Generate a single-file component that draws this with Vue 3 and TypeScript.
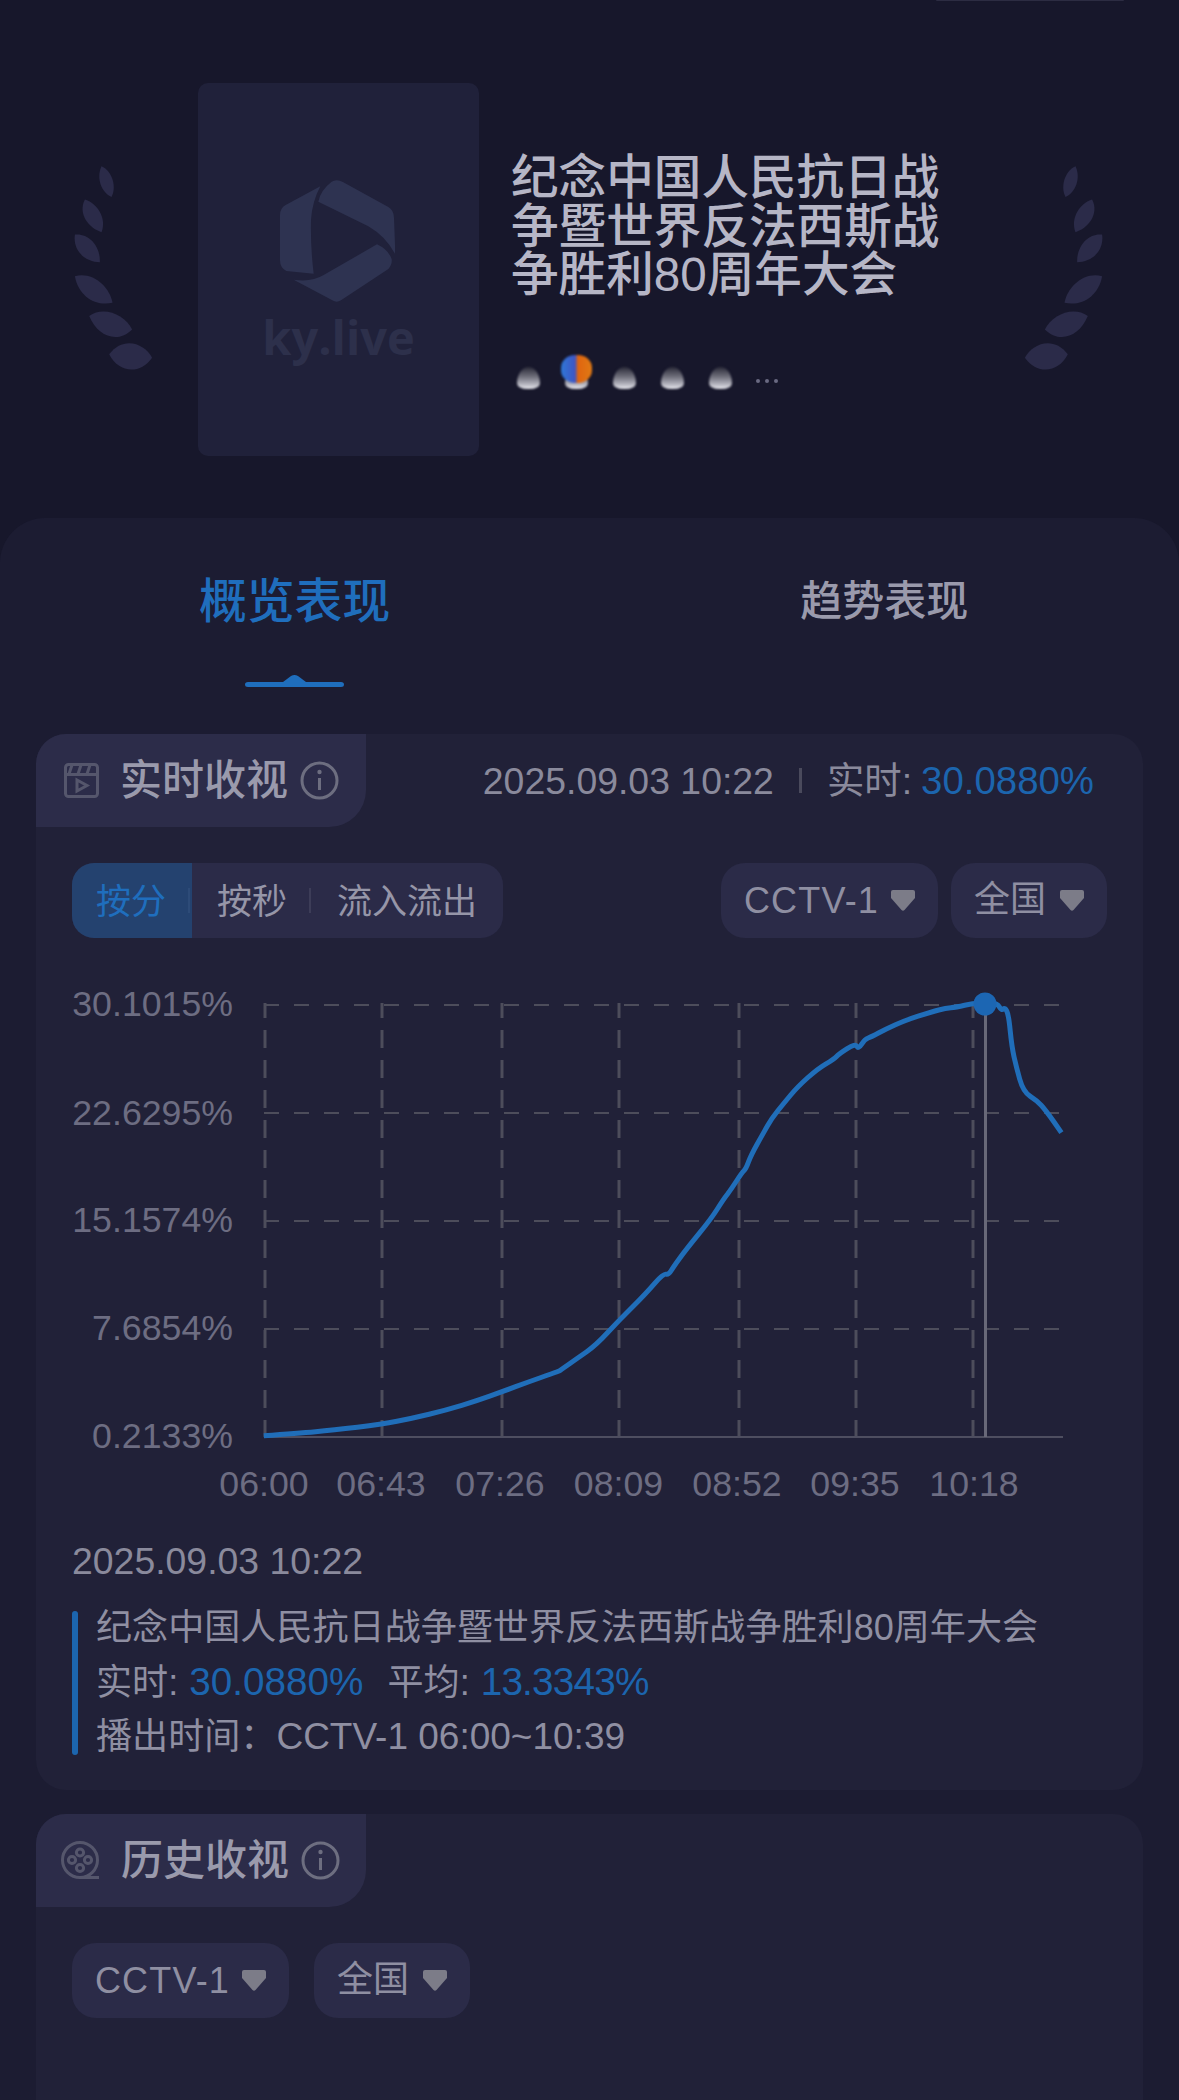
<script setup lang="ts">
const yLabels = [
  { text: '30.1015%', y: 1016 },
  { text: '22.6295%', y: 1125 },
  { text: '15.1574%', y: 1232 },
  { text: '7.6854%', y: 1340 },
  { text: '0.2133%', y: 1448 },
]
const xLabels = [
  { text: '06:00', x: 264 },
  { text: '06:43', x: 381 },
  { text: '07:26', x: 500 },
  { text: '08:09', x: 618.5 },
  { text: '08:52', x: 737 },
  { text: '09:35', x: 855 },
  { text: '10:18', x: 974 },
]
const hLines = [1005, 1113, 1221, 1329]
const vLines = [265, 382, 502, 619, 739, 856, 973]

const leftPts: [number, number][] = [
  [650, 1367], [750, 1360], [850, 1350], [993, 1333], [1080, 1315], [1180, 1290],
  [1270, 1262], [1342, 1235], [1420, 1205], [1490, 1180],
]
const rightPts: [number, number][] = [
  [0, 1172], [6, 1167], [50, 1135], [105, 1095], [172, 1020], [250, 940], [300, 880], [315, 885],
  [330, 860], [365, 810], [440, 715], [475, 657], [497, 628], [528, 578], [540, 566],
  [555, 525], [590, 460], [615, 415], [650, 370], [690, 320], [750, 265], [795, 238],
  [810, 222], [858, 190], [866, 208], [885, 178], [905, 170], [945, 148], [1000, 122],
  [1080, 95], [1120, 85], [1150, 82], [1200, 70], [1236, 70], [1270, 70], [1282, 92],
  [1292, 82], [1303, 105], [1312, 200], [1325, 260], [1345, 335], [1385, 362],
  [1410, 390], [1456, 458],
]
const pts = [
  ...leftPts.map(([x, y]) => [x / 2.904 + 40, y / 3 + 980]),
  ...rightPts.map(([x, y]) => [x / 2.904 + 560, y / 3 + 980]),
]
const f = (n: number) => n.toFixed(1)
const curve = pts.reduce((d, p, i) => {
  if (i === 0) return `M${f(p[0])} ${f(p[1])}`
  if (i === pts.length - 1) return `${d}L${f(p[0])} ${f(p[1])}`
  const n = pts[i + 1]
  return `${d}Q${f(p[0])} ${f(p[1])} ${f((p[0] + n[0]) / 2)} ${f((p[1] + n[1]) / 2)}`
}, '')

const leaves = [
  'M125 20C155 32 172 80 155 112C125 100 108 55 125 20Z',
  'M75 120C110 130 142 175 125 218C90 208 52 165 75 120Z',
  'M45 225C85 220 122 258 120 308C80 308 38 278 45 225Z',
  'M45 350C98 335 150 382 158 430C105 442 55 408 45 350Z',
  'M88 470C130 438 195 465 217 510C175 552 115 535 88 470Z',
  'M148 585C190 528 255 552 277 595C240 648 175 640 148 585Z',
]
const avatars = [0, 1, 2, 3, 4]
const caret = 'M2 0H22Q24 0 24 2V8L13.500 20Q12 21.500 10.500 20L0 8V2Q0 0 2 0Z'
</script>

<template>
  <div class="page">
    <div class="topline"></div>
    <section class="hero">
      <svg class="laurel" viewBox="40 10 245 640">
        <path v-for="d in leaves" :key="d" :d="d" />
      </svg>
      <div class="poster">
        <svg class="logo" viewBox="95 28 345 372">
          <path d="M216 50L112 106Q95 116 95 136L95 272Q95 294 114 304L196 312Q186 230 188 150Q192 95 216 50Z" />
          <path d="M210 96Q216 62 250 36Q265 26 285 38L420 112Q437 122 437 145L441 254Q412 200 360 170Z" />
          <path d="M386 224Q420 240 430 268Q432 285 420 298L278 392Q265 400 252 392L136 330Q190 338 226 316Z" />
        </svg>
        <div class="wordmark">ky.live</div>
      </div>
      <div class="info">
        <h1 class="title">纪念中国人民抗日战争暨世界反法西斯战争胜利80周年大会</h1>
        <div class="avatars">
          <span v-for="a in avatars" :key="a" class="avatar">
            <i v-if="a === 1" class="logo-badge"></i>
          </span>
          <span class="more"><i></i><i></i><i></i></span>
        </div>
      </div>
      <svg class="laurel laurel-right" viewBox="40 10 245 640">
        <path v-for="d in leaves" :key="d" :d="d" />
      </svg>
    </section>

    <section class="panel">
      <div class="tabs">
        <div class="tab tab-active">
          概览表现
          <svg class="tab-mark" viewBox="0 0 99 12" width="99" height="12">
            <path d="M0 9.500Q0 7 3 7H38L46 1Q49.500 -1 53 1L61 7H96Q99 7 99 9.500Q99 12 96 12H3Q0 12 0 9.500Z" />
          </svg>
        </div>
        <div class="tab tab-idle">趋势表现</div>
      </div>

      <article class="card card-live">
        <header class="card-head">
          <div class="head-tab">
            <svg class="head-icon" viewBox="0 0 35 35" width="35" height="35">
              <rect x="1.500" y="1.500" width="32" height="32" rx="3" />
              <path d="M1.500 11.500H33.500M8 2L5 11M17 2L14 11M26 2L23 11" />
              <path d="M13 17L23 22.500L13 28Z" />
            </svg>
            <span class="head-title">实时收视</span>
            <svg class="info-icon" viewBox="0 0 39 39" width="39" height="39">
              <circle cx="19.500" cy="19.500" r="17.500" />
              <path d="M19.500 17V29" />
              <circle class="dot" cx="19.500" cy="11" r="2.200" />
            </svg>
          </div>
          <div class="head-meta">
            <span>2025.09.03 10:22</span>
            <i class="meta-sep"></i>
            <span>实时:</span>
            <span class="blue">30.0880%</span>
          </div>
        </header>

        <div class="controls">
          <div class="segment">
            <span class="seg seg-active">按分</span>
            <span class="seg seg-mid">按秒</span>
            <span class="seg seg-last">流入流出</span>
          </div>
          <div class="drops">
            <div class="drop drop-channel">
              <span class="drop-latin">CCTV-1</span>
              <svg class="caret" viewBox="0 0 24 21" width="24" height="21"><path :d="caret" /></svg>
            </div>
            <div class="drop drop-area">
              <span class="drop-cjk">全国</span>
              <svg class="caret" viewBox="0 0 24 21" width="24" height="21"><path :d="caret" /></svg>
            </div>
          </div>
        </div>

        <svg class="chart" viewBox="36 980 1107 530" width="1107" height="530">
          <line v-for="y in hLines" :key="y" class="grid-h" x1="264" x2="1060" :y1="y" :y2="y" />
          <line v-for="x in vLines" :key="x" class="grid-v" :x1="x" :x2="x" y1="1003" y2="1437" />
          <line class="axis" x1="264" x2="1063" y1="1437" y2="1437" />
          <line class="cursor" x1="985.500" x2="985.500" y1="1005" y2="1437" />
          <path class="line" :d="curve" />
          <circle class="marker" cx="985" cy="1004" r="11.500" />
          <text v-for="l in yLabels" :key="l.text" class="label" x="233" :y="l.y" text-anchor="end">{{ l.text }}</text>
          <text v-for="l in xLabels" :key="l.text" class="label" :x="l.x" y="1496" text-anchor="middle">{{ l.text }}</text>
        </svg>

        <div class="detail">
          <div class="detail-date">2025.09.03 10:22</div>
          <div class="legend">
            <i class="legend-bar"></i>
            <div class="legend-rows">
              <div>纪念中国人民抗日战争暨世界反法西斯战争胜利80周年大会</div>
              <div>实时: <span class="blue num">30.0880%</span><span class="avg">平均: <span class="blue num num-tight">13.3343%</span></span></div>
              <div>播出时间：<span class="air">CCTV-1 06:00~10:39</span></div>
            </div>
          </div>
        </div>
      </article>

      <article class="card card-history">
        <header class="card-head">
          <div class="head-tab">
            <svg class="head-icon reel" viewBox="0 0 39 39" width="39" height="39">
              <circle cx="19" cy="19" r="17.500" />
              <circle cx="19" cy="11.500" r="3.600" />
              <circle cx="19" cy="27" r="3.600" />
              <circle cx="11" cy="19" r="3.600" />
              <circle cx="27" cy="19" r="3.600" />
              <path d="M19 36.500H38" />
            </svg>
            <span class="head-title">历史收视</span>
            <svg class="info-icon" viewBox="0 0 39 39" width="39" height="39">
              <circle cx="19.500" cy="19.500" r="17.500" />
              <path d="M19.500 17V29" />
              <circle class="dot" cx="19.500" cy="11" r="2.200" />
            </svg>
          </div>
        </header>
        <div class="controls controls-history">
          <div class="drops drops-history">
            <div class="drop drop-channel">
              <span class="drop-latin">CCTV-1</span>
              <svg class="caret" viewBox="0 0 24 21" width="24" height="21"><path :d="caret" /></svg>
            </div>
            <div class="drop drop-area">
              <span class="drop-cjk">全国</span>
              <svg class="caret" viewBox="0 0 24 21" width="24" height="21"><path :d="caret" /></svg>
            </div>
          </div>
        </div>
      </article>
    </section>
  </div>
</template>

<style>
html, body { margin: 0; background: #17172b; }
</style>

<style scoped>
.page {
  width: 1179px;
  height: 2100px;
  overflow: hidden;
  background: #17172b;
  font-family: "Liberation Sans", "Noto Sans CJK SC", sans-serif;
  color: #9696a8;
}
.topline {
  width: 188px;
  height: 1px;
  margin-left: 936px;
  margin-bottom: 1px;
  background: #2c2c42;
  border-radius: 0 0 4px 4px;
}
.hero {
  display: flex;
  align-items: flex-start;
  height: 516px;
}
.laurel {
  width: 82px;
  height: 213px;
  margin: 161px 0 0 73px;
  flex: none;
}
.laurel path { fill: #2b2b49; }
.laurel-right {
  margin: 161px 0 0 0;
  transform: scaleX(-1);
}
.poster {
  width: 281px;
  height: 373px;
  margin: 81px 0 0 43px;
  padding-top: 96px;
  box-sizing: border-box;
  flex: none;
  display: flex;
  flex-direction: column;
  align-items: center;
  background: #20213a;
  border-radius: 10px;
}
.logo { width: 115px; height: 124px; margin-left: -2px; }
.logo path { fill: #2e3351; }
.wordmark {
  font-family: "Open Sans", sans-serif;
  font-weight: 700;
  font-size: 47px;
  line-height: 60px;
  color: #2d304b;
  margin-top: 4px;
}
.info {
  width: 511px;
  margin: 152px 0 0 32px;
  flex: none;
}
.title {
  width: 432px;
  margin: 0;
  font-size: 47.600px;
  line-height: 48.500px;
  font-weight: 500;
  color: #b6b6c6;
}
.avatars {
  display: flex;
  align-items: center;
  gap: 25px;
  margin: 67.500px 0 0 6px;
}
.avatar {
  position: relative;
  width: 23px;
  height: 22px;
  flex: none;
  border-radius: 50% 50% 45% 45% / 75% 75% 25% 25%;
  background: linear-gradient(to bottom, #2a2a38 0%, #70707c 45%, #b8b8c2 80%, #ececf2 100%);
  filter: blur(1px);
}
.logo-badge {
  position: absolute;
  left: -4px;
  top: -12px;
  width: 31px;
  height: 28px;
  border-radius: 45%;
  background: linear-gradient(to right, #2f78d8 0%, #3f55c4 46%, #e0640f 54%, #e07a14 100%);
}
.more {
  display: flex;
  gap: 5px;
  margin-left: -1px;
  margin-top: 6px;
}
.more i {
  width: 4px;
  height: 4px;
  border-radius: 50%;
  background: #6a6a82;
}
.panel {
  height: 1582px;
  padding: 0 36px;
  background: #1c1c32;
  border-radius: 45px 45px 0 0;
}
.tabs {
  display: flex;
  height: 216px;
  padding-top: 56px;
  box-sizing: border-box;
}
.tab {
  font-size: 47.800px;
  line-height: 56px;
  font-weight: 500;
}
.tab-active {
  display: flex;
  flex-direction: column;
  align-items: center;
  align-self: flex-start;
  margin-left: 163px;
  color: #1f6ebd;
}
.tab-mark { margin-top: 45px; }
.tab-mark path { fill: #1f6ebd; }
.tab-idle {
  margin-left: 410px;
  font-size: 42px;
  color: #9a9aac;
}
.card {
  background: #212138;
  border-radius: 30px;
}
.card-live {
  height: 1056px;
  margin-bottom: 24px;
}
.card-history { height: 400px; }
.card-head {
  display: flex;
  align-items: center;
  height: 93px;
}
.head-tab {
  width: 330px;
  height: 93px;
  box-sizing: border-box;
  padding-left: 28px;
  display: flex;
  align-items: center;
  background: #2c2c49;
  border-radius: 30px 0 37px 0;
}
.head-icon {
  flex: none;
  fill: none;
  stroke: #55566c;
  stroke-width: 3;
}
.reel { margin-left: -3px; }
.head-title {
  width: 168px;
  margin-left: 21px;
  font-size: 42px;
  line-height: 50px;
  font-weight: 500;
  color: #9a9aac;
  flex: none;
}
.info-icon {
  flex: none;
  margin-left: 12px;
  fill: none;
  stroke: #6d6e80;
  stroke-width: 3;
}
.info-icon .dot { fill: #6d6e80; stroke: none; }
.head-meta {
  margin-left: auto;
  padding-right: 49px;
  display: flex;
  align-items: center;
  font-size: 37.400px;
  line-height: 46px;
  color: #8a8a9c;
}
.meta-sep {
  width: 3px;
  height: 25px;
  margin: 0 25px;
  background: #4a4a5c;
}
.blue { color: #1c65ae; }
.head-meta .blue { margin-left: 9px; font-size: 38.400px; }
.controls {
  display: flex;
  justify-content: space-between;
  padding: 36px 36px 0;
  height: 75px;
}
.segment {
  display: flex;
  width: 431px;
  height: 75px;
  background: #2b2b48;
  border-radius: 22px;
  overflow: hidden;
  font-size: 35px;
  line-height: 77px;
}
.seg { flex: none; box-sizing: border-box; position: relative; }
.seg-active {
  width: 120px;
  padding-left: 24px;
  background: #24426f;
  color: #1f6ebd;
}
.seg-mid { width: 119px; padding-left: 25px; }
.seg-last { padding-left: 26px; }
.seg-active::after,
.seg-mid::after {
  content: "";
  position: absolute;
  right: 0;
  top: 25px;
  width: 2px;
  height: 25px;
  background: #3d3d58;
}
.seg-active::after { right: 2px; background: #2d4b78; }
.drops { display: flex; gap: 13px; }
.drops-history { gap: 25px; }
.drop {
  height: 75px;
  box-sizing: border-box;
  display: flex;
  align-items: center;
  justify-content: center;
  gap: 12px;
  background: #2b2b48;
  border-radius: 24px;
  font-size: 36px;
  color: #8f8fa2;
}
.drop-latin { letter-spacing: 1.200px; }
.drop-cjk { line-height: 40px; margin-top: -1px; }
.drop-channel { width: 217px; }
.drop-area { width: 156px; gap: 14px; }
.caret { flex: none; fill: #7c7c88; }
.chart {
  display: block;
  margin-top: 42px;
}
.grid-h {
  stroke: #4d4d5b;
  stroke-width: 2;
  stroke-dasharray: 15 15;
}
.grid-v {
  stroke: #4d4d5b;
  stroke-width: 3;
  stroke-dasharray: 18 12;
  stroke-dashoffset: 3;
}
.axis { stroke: #4e4e60; stroke-width: 2; }
.cursor { stroke: #686878; stroke-width: 3; }
.line {
  fill: none;
  stroke: #206eb9;
  stroke-width: 5;
  stroke-linejoin: round;
}
.marker { fill: #1c66b3; }
.label {
  font-family: "Liberation Sans", sans-serif;
  font-size: 35.700px;
  fill: #6d6d82;
}
.detail { padding: 26px 36px 0; }
.detail-date {
  font-size: 37.400px;
  line-height: 50px;
  color: #8a8a9c;
}
.legend {
  display: flex;
  align-items: center;
  gap: 18px;
  margin-top: 15px;
}
.legend-bar {
  width: 6px;
  height: 144px;
  background: #1c65ae;
  border-radius: 3px;
  flex: none;
}
.legend-rows {
  font-size: 36.100px;
  line-height: 54px;
  color: #8f8fa2;
  white-space: nowrap;
}
.num { font-size: 38.700px; margin-left: 1px; }
.num-tight { letter-spacing: -0.800px; }
.air { font-size: 37px; }
.avg { margin-left: 24px; }
.controls-history { justify-content: flex-start; }
</style>
